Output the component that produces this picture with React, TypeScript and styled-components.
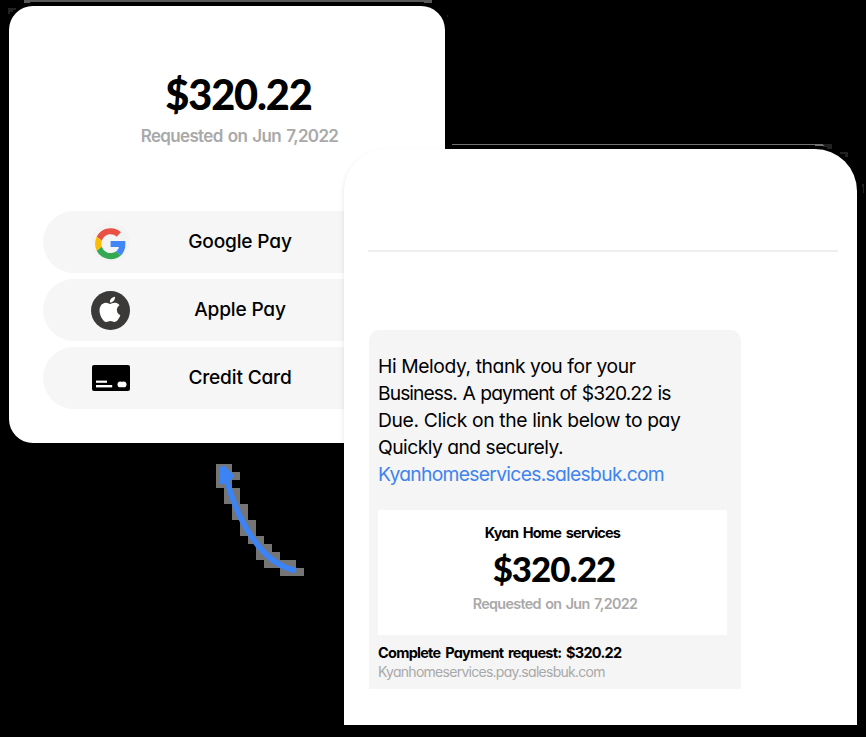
import React from 'react';
import styled, { createGlobalStyle } from 'styled-components';

const GlobalStyle = createGlobalStyle`
  * { box-sizing: border-box; }
  body { margin: 0; background: #000; overflow: hidden; }
`;

const Stage = styled.main`
  position: relative;
  display: flex;
  align-items: flex-start;
  width: 866px;
  height: 737px;
  padding: 6px 0 0 9px;
  background: #000;
  color: #000;
  font-family: Inter, 'Liberation Sans', sans-serif;
  font-feature-settings: 'cv11';
`;

const Overlay = styled.svg`
  position: absolute;
  inset: 0;
  pointer-events: none;
`;

const PayCard = styled.section`
  flex: none;
  width: 436px;
  height: 437px;
  padding-top: 63px;
  border-radius: 24px;
  background: #fff;
`;

const MessageCard = styled.section`
  position: relative;
  flex: none;
  width: 513px;
  height: 576px;
  margin: 143px 0 0 -101px;
  border-radius: 42px 42px 0 0;
  background: #fff;
  box-shadow: -1px 2px 4px rgba(0, 0, 0, 0.08);
`;

const Text = styled.div<{
  $size: number;
  $line: number;
  $weight?: number;
  $spacing?: number;
  $word?: number;
  $color?: string;
  $top?: number;
  $shift?: number;
  $center?: boolean;
}>`
  margin-top: ${p => p.$top ?? 0}px;
  padding-left: ${p => p.$shift ?? 0}px;
  font-size: ${p => p.$size}px;
  line-height: ${p => p.$line}px;
  font-weight: ${p => p.$weight ?? 400};
  letter-spacing: ${p => p.$spacing ?? 0}px;
  word-spacing: ${p => p.$word ?? 0}px;
  color: ${p => p.$color ?? '#000'};
  text-align: ${p => (p.$center ? 'center' : 'left')};
  white-space: nowrap;
`;

const Amount = styled(Text)`
  font-family: Lato, sans-serif;
`;

const Methods = styled.div`
  display: flex;
  flex-direction: column;
  gap: 6px;
  margin: 63px 0 0 34px;
`;

const Method = styled.button`
  display: grid;
  grid-template-columns: 135px 124px;
  align-items: center;
  width: 394px;
  height: 62px;
  padding: 0;
  border: 0;
  border-radius: 31px;
  background: #f6f6f6;
  color: #000;
  font: inherit;
  font-feature-settings: inherit;
`;

const IconSlot = styled.span`
  display: flex;
  justify-content: center;
`;

const MethodLabel = styled.span`
  padding-bottom: 2px;
  font-size: 19.1px;
  font-weight: 550;
  letter-spacing: -0.17px;
  text-align: center;
`;

const Divider = styled.hr`
  margin: 101px 19px 0 24px;
  border: 0;
  height: 2px;
  background: #efefef;
`;

const Bubble = styled.div`
  width: 371.5px;
  height: 359px;
  margin: 78px 0 0 25px;
  padding: 23px 0 0 9px;
  border-radius: 10px 10px 0 0;
  background: #f5f5f5;
`;

const Preview = styled.div`
  width: 349px;
  height: 125px;
  margin-top: 22px;
  padding-top: 13px;
  background: #fff;
`;

const GoogleIcon = () => (
  <svg width="39" height="39" viewBox="0 0 39 39">
    <circle cx="19.5" cy="19.5" r="19.5" fill="#f3f3f4" />
    <g transform="translate(4.1 5.2) scale(.645)">
      <path fill="#4285f4" d="M46.98 24.55c0-1.57-.15-3.09-.38-4.55H24v9.02h12.94c-.58 2.96-2.26 5.48-4.78 7.18l7.73 6c4.51-4.18 7.09-10.36 7.09-17.65z" />
      <path fill="#e94f42" d="M24 9.5c3.54 0 6.71 1.22 9.21 3.6l6.85-6.85C35.9 2.38 30.47 0 24 0 14.62 0 6.51 5.38 2.56 13.22l7.98 6.19C12.43 13.72 17.74 9.5 24 9.5z" />
      <path fill="#fbbc05" d="M10.53 28.59c-.48-1.45-.76-2.99-.76-4.59s.27-3.14.76-4.59l-7.98-6.19C.92 16.46 0 20.12 0 24c0 3.88.92 7.54 2.56 10.78l7.97-6.19z" />
      <path fill="#34a853" d="M24 48c6.48 0 11.93-2.13 15.89-5.81l-7.73-6c-2.15 1.45-4.92 2.3-8.16 2.3-6.26 0-11.57-4.22-13.47-9.91l-7.98 6.19C6.51 42.62 14.62 48 24 48z" />
    </g>
  </svg>
);

const AppleIcon = () => (
  <svg width="39" height="40" viewBox="0 0 39 40">
    <circle cx="19.5" cy="20.5" r="19.5" fill="#3b3a39" />
    <g transform="translate(3.6 4.2) scale(1.28 1.26)" fill="#fff">
      <path d="M18.71 19.5c-.83 1.24-1.71 2.45-3.05 2.47-1.34.03-1.77-.79-3.29-.79-1.53 0-2 .77-3.27.82-1.31.05-2.3-1.32-3.14-2.53C4.25 17 2.94 12.45 4.7 9.39c.87-1.52 2.43-2.48 4.12-2.51 1.28-.02 2.5.87 3.29.87.78 0 2.26-1.07 3.81-.91.65.03 2.47.26 3.64 1.98-.09.06-2.17 1.28-2.15 3.81.03 3.02 2.65 4.03 2.68 4.04-.03.07-.42 1.44-1.38 2.83" />
      <path d="M13 3.5c.73-.83 1.94-1.46 2.94-1.5.13 1.17-.34 2.35-1.04 3.19-.69.85-1.83 1.51-2.95 1.42-.15-1.15.41-2.35 1.05-3.11z" />
    </g>
  </svg>
);

const CardIcon = () => (
  <svg width="38" height="26" viewBox="0 0 38 26">
    <rect width="38" height="26" rx="2" fill="#000" />
    <g fill="#fff">
      <rect x="4" y="15.6" width="11" height="2.2" />
      <rect x="4" y="20" width="16.2" height="2.4" />
      <circle cx="28.4" cy="19.4" r="2.9" />
      <circle cx="31.6" cy="19.4" r="2.9" />
    </g>
  </svg>
);

const methods = [
  { label: 'Google Pay', Icon: GoogleIcon },
  { label: 'Apple Pay', Icon: AppleIcon },
  { label: 'Credit Card', Icon: CardIcon },
];

const message = [
  { text: 'Hi Melody, thank you for your', spacing: -0.41 },
  { text: 'Business. A payment of $320.22 is', spacing: -0.94, word: 1 },
  { text: 'Due. Click on the link below to pay', spacing: -0.36 },
  { text: 'Quickly and securely.', spacing: -0.53 },
  { text: 'Kyanhomeservices.salesbuk.com', spacing: -0.7, color: '#3f83ef' },
];

/* Stepped halo behind the arrow: [x, y, width, height] */
const halo = [
  [216, 464, 16, 24], [232, 472, 8, 8], [224, 488, 16, 16], [232, 504, 16, 16],
  [240, 520, 16, 16], [248, 536, 16, 8], [256, 544, 16, 16], [264, 552, 16, 16],
  [272, 552, 8, 8], [280, 560, 16, 8], [280, 568, 24, 8],
];

export default function App() {
  return (
    <>
      <GlobalStyle />
      <Stage>
        <Overlay width="866" height="737" shapeRendering="crispEdges">
          <g fill="#585858">
            <rect x="30" y="0" width="402" height="2" />
            <rect x="24" y="0" width="6" height="3" />
            <rect x="424" y="2" width="8" height="1" />
          </g>
          <g fill="#222">
            <path d="M8 8h8v2h-3v2h-3v2h-2z" />
            <path d="M448 15v2h-1v-2zM823 144h9v5h-5v-2h-4zM840 152h8v5h-3v-3h-5zM862 184h2v9h-1v-6h-1z" />
          </g>
          <path d="M452 144h371v1h-371zM815 145h9v1h-9z" fill="#707372" />
        </Overlay>
        <PayCard>
          <Amount $size={41.5} $line={50} $weight={900} $spacing={-1.1} $shift={23} $center>$320.22</Amount>
          <Text $size={17} $line={24} $weight={600} $spacing={-0.66} $word={1.5} $color="#a9a9a9" $top={5} $shift={25} $center>
            Requested on Jun 7,2022
          </Text>
          <Methods>
            {methods.map(({ label, Icon }) => (
              <Method key={label}>
                <IconSlot><Icon /></IconSlot>
                <MethodLabel>{label}</MethodLabel>
              </Method>
            ))}
          </Methods>
        </PayCard>
        <MessageCard>
          <Divider />
          <Bubble>
            {message.map(m => (
              <Text key={m.text} $size={19.3} $line={27} $spacing={m.spacing} $word={m.word} $color={m.color}>{m.text}</Text>
            ))}
            <Preview>
              <Text $size={14.5} $line={20} $weight={650} $spacing={-0.8} $word={2} $shift={-1} $center>Kyan Home services</Text>
              <Amount $size={34.8} $line={40} $weight={900} $spacing={-0.95} $top={6} $shift={3} $center>$320.22</Amount>
              <Text $size={14.3} $line={20} $weight={600} $spacing={-0.66} $word={1.5} $color="#a9a9a9" $top={5} $shift={5} $center>
                Requested on Jun 7,2022
              </Text>
            </Preview>
            <Text $size={14.5} $line={20} $weight={650} $spacing={-0.74} $word={2} $top={8}>Complete Payment request: $320.22</Text>
            <Text $size={14} $line={18} $spacing={-0.73} $color="#a9a9a9">Kyanhomeservices.pay.salesbuk.com</Text>
          </Bubble>
        </MessageCard>
        <Overlay width="866" height="737">
          <g fill="#757575" shapeRendering="crispEdges">
            {halo.map(([x, y, w, h]) => <rect key={`${x}-${y}`} x={x} y={y} width={w} height={h} />)}
          </g>
          <path d="M226 478C237 518 260 564 296 570.5" fill="none" stroke="#3c83f6" strokeWidth="5.6" />
          <path d="M224 466.5L233 476L227 483L220.5 483L221 468Z" fill="#3c83f6" stroke="#3c83f6" strokeWidth="2" strokeLinejoin="round" />
        </Overlay>
      </Stage>
    </>
  );
}
